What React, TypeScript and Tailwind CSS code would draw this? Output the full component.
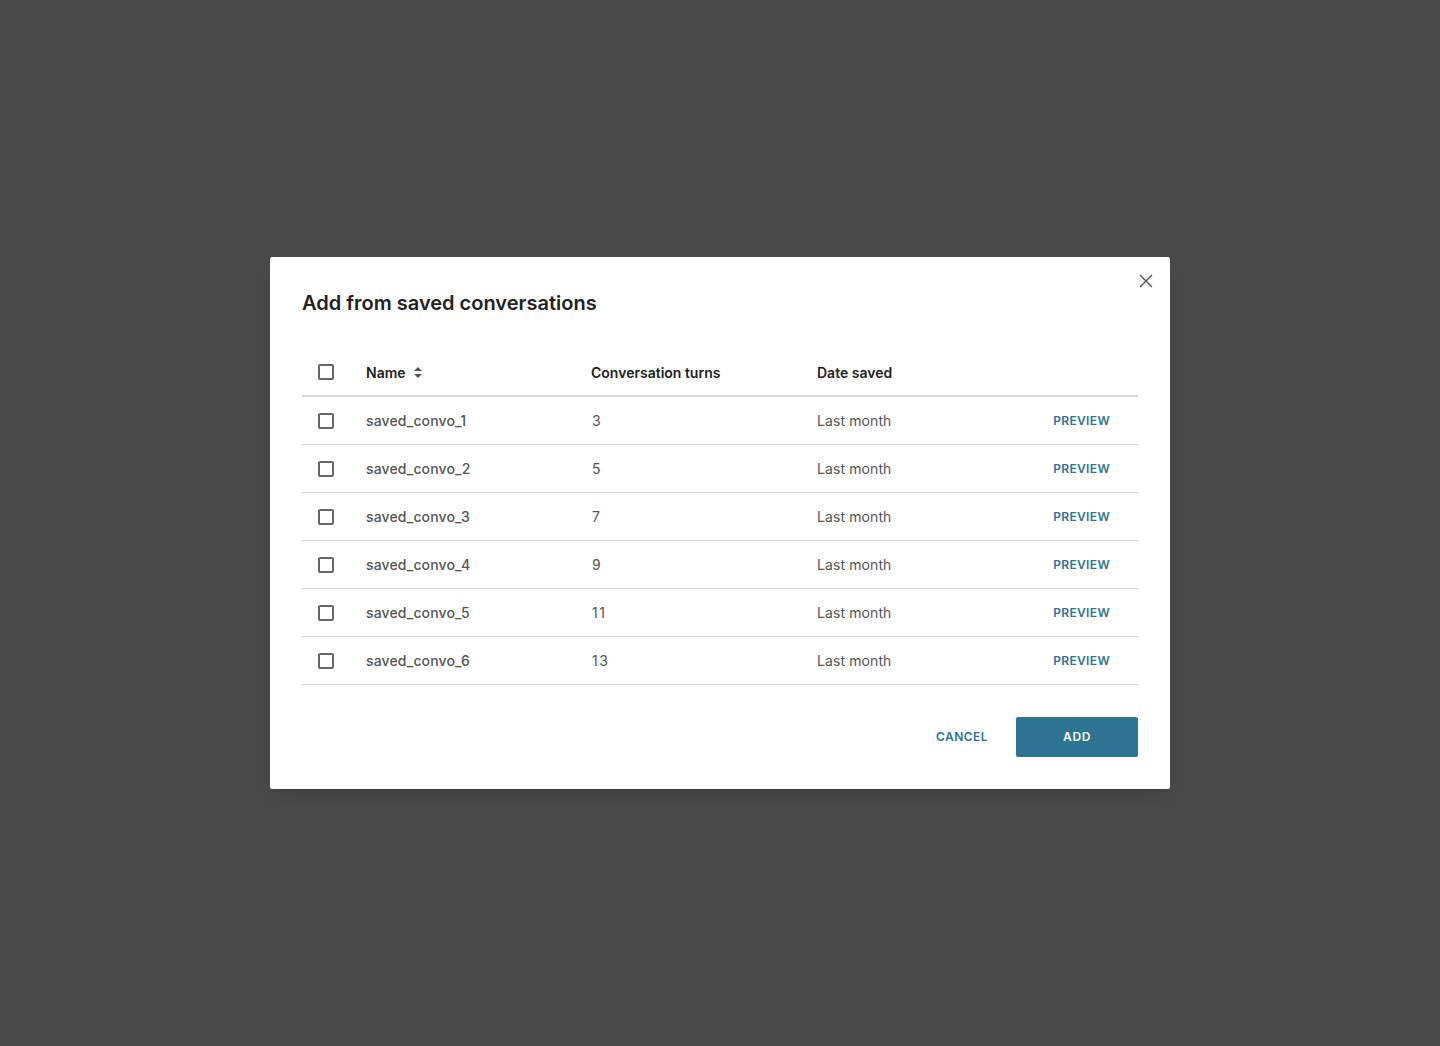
import React from "react";

const rows = [
  { name: "saved_convo_1", turns: "3" },
  { name: "saved_convo_2", turns: "5" },
  { name: "saved_convo_3", turns: "7" },
  { name: "saved_convo_4", turns: "9" },
  { name: "saved_convo_5", turns: "11" },
  { name: "saved_convo_6", turns: "13" },
];

function Box() {
  return <div className="w-4 h-4 border-2 border-[#666666] rounded-[2px] bg-white" />;
}

export default function App() {
  return (
    <div
      className="w-[1440px] h-[1046px] bg-[#4a4a48] flex items-center justify-center"
      style={{ fontFamily: "Inter, 'Noto Sans', sans-serif" }}
    >
      <div className="relative w-[900px] bg-white rounded-[2px] shadow-lg px-8 pt-8 pb-8">
        <button className="absolute right-[12px] top-[12px] w-[24px] h-[24px] flex items-center justify-center text-[#555]">
          <svg width="14" height="14" viewBox="0 0 14 14" fill="none" stroke="#555" strokeWidth="1.4">
            <path d="M1 1L13 13M13 1L1 13" />
          </svg>
        </button>
        <h2 className="text-[20px] leading-[28px] font-semibold text-[#222]">Add from saved conversations</h2>

        <div className="mt-8">
          <div className="grid grid-cols-[64px_225px_226px_1fr] h-[48px] items-center border-b-2 border-[#d8d8d8] text-[14px] font-semibold text-[#222]">
            <div className="pl-4"><Box /></div>
            <div className="flex items-center gap-[8px]">
              <span>Name</span>
              <svg width="8" height="11" viewBox="0 0 8 11" fill="#555">
                <path d="M4 0L8 4H0Z" />
                <path d="M4 11L0 7H8Z" />
              </svg>
            </div>
            <div>Conversation turns</div>
            <div>Date saved</div>
          </div>
          {rows.map((r) => (
            <div
              key={r.name}
              className="grid grid-cols-[64px_225px_226px_1fr] h-[48px] items-center border-b border-[#dcdcdc] text-[14px] text-[#555]"
            >
              <div className="pl-4"><Box /></div>
              <div className="font-medium tracking-[0.15px]">{r.name}</div>
              <div className="pl-[1px] tracking-[1.5px]">{r.turns}</div>
              <div className="flex items-center justify-between pr-[28px]">
                <span className="tracking-[0.1px]">Last month</span>
                <span className="text-[12px] font-semibold text-[#2d7593] tracking-[0.35px]">PREVIEW</span>
              </div>
            </div>
          ))}
        </div>

        <div className="mt-8 flex items-center justify-end gap-[28px]">
          <button className="text-[12px] font-semibold text-[#2d7593] tracking-[0.45px]">CANCEL</button>
          <button className="w-[122px] h-[40px] bg-[#2d7593] rounded-[2px] text-white text-[12px] font-semibold tracking-[0.6px]">
            ADD
          </button>
        </div>
      </div>
    </div>
  );
}
